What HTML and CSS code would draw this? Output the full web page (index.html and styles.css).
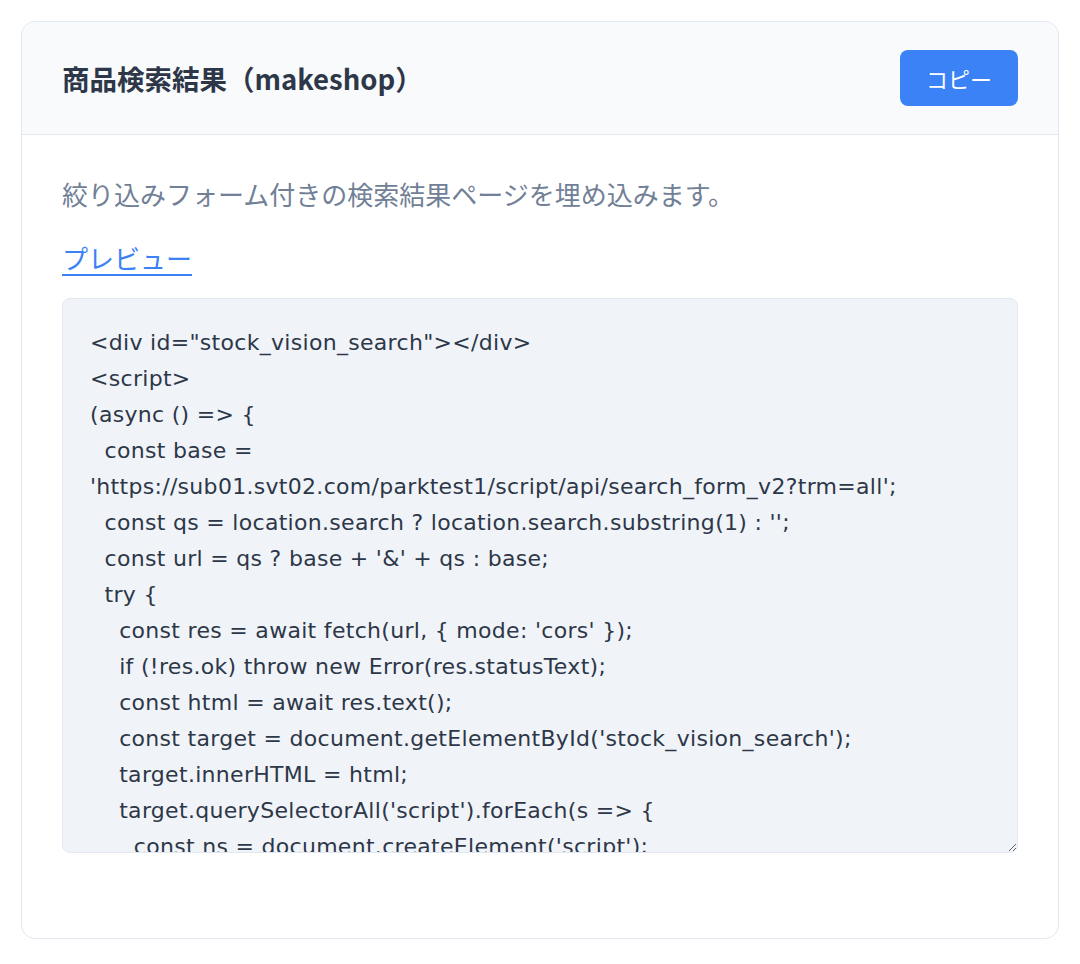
FILE: index.html
```html
<!DOCTYPE html>
<html lang="ja">
<head>
  <meta charset="UTF-8" />
  <title>商品検索結果（makeshop）</title>
  <link rel="stylesheet" href="styles.css">
</head>
<body>

  <div class="card">
    <div class="card-header">
      <h2 class="card-title">商品検索結果（makeshop）</h2>
      <button class="copy-btn" type="button">コピー</button>
    </div>

    <div class="card-body">
      <p class="desc">絞り込みフォーム付きの検索結果ページを埋め込みます。</p>
      <p class="preview"><a href="#">プレビュー</a></p>
      <!-- word joiner after "?" keeps the url on one line -->
      <textarea class="code" readonly spellcheck="false">&lt;div id="stock_vision_search"&gt;&lt;/div&gt;
&lt;script&gt;
(async () =&gt; {
  const base = 'https://sub01.svt02.com/parktest1/script/api/search_form_v2?&#8288;trm=all';
  const qs = location.search ? location.search.substring(1) : '';
  const url = qs ? base + '&amp;' + qs : base;
  try {
    const res = await fetch(url, { mode: 'cors' });
    if (!res.ok) throw new Error(res.statusText);
    const html = await res.text();
    const target = document.getElementById('stock_vision_search');
    target.innerHTML = html;
    target.querySelectorAll('script').forEach(s =&gt; {
      const ns = document.createElement('script');
      if (s.src) ns.src = s.src; else ns.textContent = s.textContent;
      document.body.appendChild(ns);
    });
  } catch (e) {
    console.error(e);
  }
})();
&lt;/script&gt;</textarea>
    </div>
  </div>

</body>
</html>
```

FILE: styles.css
```css
body {
  margin: 0;
  padding: 21px;
  background: #fff;
  font-family: "Noto Sans CJK JP", "Noto Sans", sans-serif;
  color: #2d3748;
}

.card {
  width: 1038px;
  height: 918px;
  box-sizing: border-box;
  border: 1.5px solid #e2e8f0;
  border-radius: 14px;
  overflow: hidden;
  background: #fff;
}

.card-header {
  display: flex;
  align-items: center;
  justify-content: space-between;
  height: 113px;
  box-sizing: border-box;
  padding: 0 40px;
  background: #f8fafc;
  border-bottom: 1.5px solid #e2e8f0;
}

.card-title {
  margin: 0;
  font-size: 27.5px;
  font-weight: bold;
  color: #2d3748;
}

.copy-btn {
  width: 118px;
  height: 56px;
  border: none;
  border-radius: 8px;
  background: #3b82f6;
  color: #fff;
  font-family: "Noto Sans CJK JP", sans-serif;
  font-size: 22px;
  cursor: pointer;
}

.card-body {
  padding: 40px;
}

.desc {
  margin: 0;
  font-size: 26px;
  line-height: 38px;
  color: #718096;
}

.preview {
  margin: 26px 0 0;
  font-size: 26px;
  line-height: 38px;
}

.preview a {
  color: #3b82f6;
  text-decoration: underline;
  text-underline-offset: 5px;
}

.code {
  display: block;
  width: 100%;
  height: 555px;
  box-sizing: border-box;
  margin-top: 21px;
  padding: 26px 27px;
  background: #f0f4f8;
  border: 1.5px solid #e2e8f0;
  border-radius: 8px;
  font-family: "DejaVu Sans", sans-serif;
  font-size: 22px;
  letter-spacing: 0.3px;
  line-height: 36px;
  color: #2d3748;
  outline: none;
  resize: vertical;
  overflow: hidden;
}
```
